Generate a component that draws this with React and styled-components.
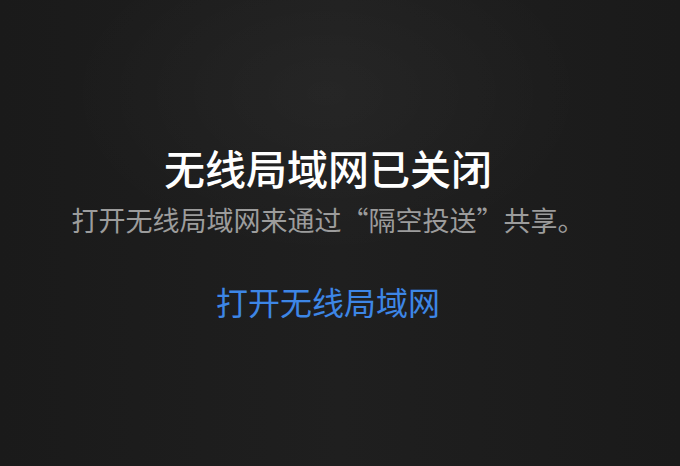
import styled, { createGlobalStyle } from "styled-components";

const Global = createGlobalStyle`
  html, body {
    margin: 0;
    padding: 0;
    background: #1c1c1c;
  }
  #root {
    height: 466px;
  }
`;

const Screen = styled.div`
  height: 100%;
  display: flex;
  flex-direction: column;
  align-items: center;
  padding: 143px 24px 0 0;
  box-sizing: border-box;
  background:
    radial-gradient(ellipse 55% 50% at 48% 20%, rgba(255, 255, 255, 0.03), transparent 70%),
    linear-gradient(90deg, #1a1a1a 0%, #1f1f1f 50%, #1a1a1a 100%);
  font-family: "Noto Sans CJK SC", "Noto Sans", sans-serif;
`;

const Title = styled.h1`
  margin: 0;
  font-size: 41px;
  line-height: 48px;
  font-weight: 500;
  color: #ffffff;
`;

const Message = styled.p`
  margin: 11px 0 0;
  font-size: 27px;
  line-height: 36px;
  font-weight: 400;
  color: #9c9c9c;
`;

const Action = styled.button`
  margin-top: 43px;
  padding: 0;
  border: none;
  background: none;
  font-family: inherit;
  font-size: 32px;
  line-height: 40px;
  color: #3d86e6;
  cursor: pointer;
`;

export default function App() {
  return (
    <>
      <Global />
      <Screen>
        <Title>无线局域网已关闭</Title>
        <Message>打开无线局域网来通过“隔空投送”共享。</Message>
        <Action>打开无线局域网</Action>
      </Screen>
    </>
  );
}
